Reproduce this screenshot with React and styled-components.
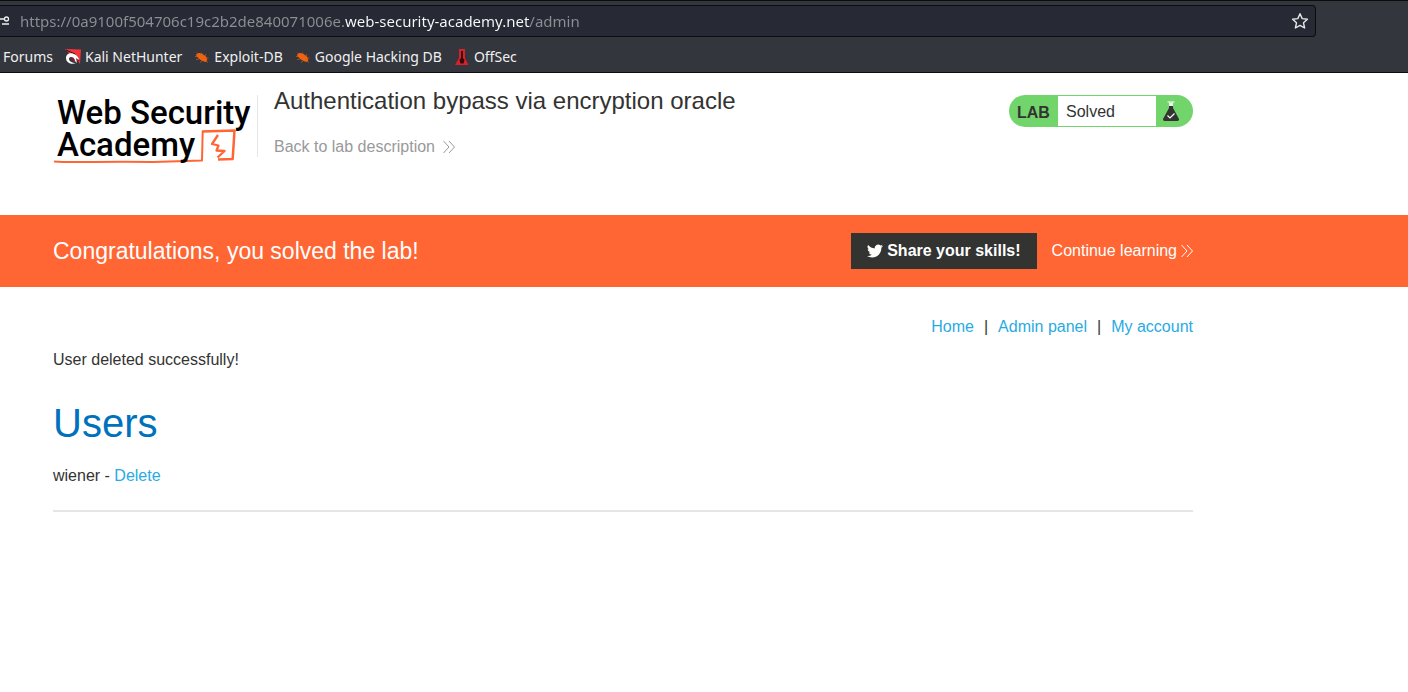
import React from "react";
import styled, { createGlobalStyle } from "styled-components";

const GlobalStyle = createGlobalStyle`
  *, *::before, *::after { box-sizing: border-box; }
  body {
    margin: 0;
    background: #fff;
    color: #333332;
    font: 16px/24px "Liberation Sans", Arial, sans-serif;
  }
  h1, h2, p { margin: 0; font-weight: 400; }
  a { text-decoration: none; }
`;

/* Browser chrome */

const Chrome = styled.div`
  padding-top: 4px;
  background: #33363d;
  border: solid #0c0c0d;
  border-width: 1px 0;
  color: #f0f0f1;
  font: 14px/20px "Noto Sans", sans-serif;
`;

const AddressBar = styled.form`
  display: flex;
  align-items: center;
  height: 32px;
  margin-right: 92px;
  padding-right: 6px;
  background: #272a34;
  border: 1px solid #0c0c0d;
  border-left: 0;
  border-radius: 0 4px 4px 0;
`;

const Permissions = styled.svg`
  flex: none;
  width: 10px;
  height: 16px;
  margin-right: 10px;
`;

/* The host is lit and the rest of the address is dimmed. */
const Address = styled.input`
  flex: 1;
  min-width: 0;
  padding: 0;
  border: 0;
  outline: 0;
  font: inherit;
  font-size: 15px;
  color: transparent;
  caret-color: #fff;
  background: linear-gradient(to right, #8e8f94 324px, #fbfbfe 324px 510px, #8e8f94 510px);
  background-clip: text;
`;

const StarButton = styled.button`
  display: flex;
  padding: 0;
  border: 0;
  background: none;
  color: #e8e8ea;
`;

const Bookmarks = styled.nav`
  display: flex;
  gap: 12px;
  height: 35px;
  padding-left: 3px;
  align-items: center;
  padding-top: 4px;
`;

const Bookmark = styled.a`
  display: flex;
  align-items: center;
  gap: 4px;
  color: inherit;
  white-space: nowrap;
`;

/* Lab page */

const Container = styled.div`
  max-width: 1193px;
  padding-left: 53px;
`;

const HeaderRow = styled(Container)`
  display: flex;
  align-items: flex-start;
  height: 142px;
  padding-top: 22px;
`;

const LogoLink = styled.a`
  width: 205px;
  height: 62px;
  margin-right: 16px;
  border-right: 1px solid #e6e6e6;
`;

const Logo = styled.svg`
  display: block;
  overflow: visible;
  font: 500 33px Roboto, sans-serif;
`;

const Titles = styled.div`
  flex: 1;
  display: flex;
  flex-direction: column;
  align-items: flex-start;
  gap: 28px;
`;

const Title = styled.h2`
  font-size: 24px;
  line-height: 12px;
`;

const ArrowLink = styled.a`
  display: flex;
  align-items: center;
  gap: ${(p) => p.$gap};
  color: ${(p) => p.$color};
`;

const Status = styled.div`
  display: flex;
  align-items: center;
  width: 184px;
  height: 32px;
  padding: 1px 0 1px 8px;
  background: #72d56c;
  border-radius: 16px;
`;

const StatusLabel = styled.strong`
  width: 41px;
  padding-top: 4px;
`;

const StatusValue = styled.p`
  width: 98px;
  padding: 4px 8px 2px;
  background: #fff;
`;

const Flask = styled.svg`
  margin-left: 7px;
`;

const Banner = styled.section`
  background: #ff6633;
  color: #fff;
`;

const BannerRow = styled(Container)`
  display: flex;
  align-items: center;
  height: 72px;
`;

const BannerText = styled.p`
  flex: 1;
  font-size: 23px;
`;

const ShareButton = styled.button`
  display: flex;
  align-items: center;
  gap: 4px;
  height: 36px;
  margin-right: 15px;
  padding: 0 16px;
  border: 0;
  background: #333332;
  color: #fff;
  font: inherit;
  font-weight: 700;
`;

const Content = styled(Container).attrs({ as: "main" })`
  display: block;
  padding-top: 28px;
`;

const TopLinks = styled.nav`
  display: flex;
  justify-content: flex-end;
  gap: 10px;
  margin-bottom: 9px;
`;

const TextLink = styled.a`
  color: #29abe2;
`;

const Heading = styled.h1`
  margin: 27px 0 17px;
  color: #0071bc;
  font-size: 40px;
  line-height: 48px;
`;

const UserRow = styled.p`
  padding-bottom: 22px;
  border-bottom: 2px solid #e6e6e6;
`;

const NetHunterIcon = () => (
  <svg width="16" height="16" viewBox="0 0 16 16" aria-hidden="true">
    <path d="M0 0 16 .500 15 15 11 9 5 5Z" fill="#f5333c" />
    <path d="M1 1 10 5 14 12" fill="none" stroke="#30141a" />
    <path d="M1 9C1 5 5 3 9 5c3 1 5 4 5 6l-3-2 1 5-4-4C7 7 4 8 4 10c0 2 3 4 7 4-4 2-10 0-10-5Z" fill="#fff" />
    <path d="M5 10c3-2 4 0 4 3" fill="none" stroke="#7d252d" strokeWidth="2" />
  </svg>
);

const BugIcon = () => (
  <svg width="16" height="16" viewBox="0 0 16 16" aria-hidden="true">
    <path d="M2 6C3 3 7 3.500 10 6c3 1.500 4 5 2.500 7C9 13 4 10 2 6Z" fill="#ef6212" />
    <path d="M4 5 2.500 3.500M8 5 7.500 3.500M11 7l1-2M3 7.500H1M5 10l-3 .5M8 12l-2 1.500M12 9l2.500 0M12 12l2 1.500" stroke="#a6501f" fill="none" />
  </svg>
);

const OffSecIcon = () => (
  <svg width="16" height="16" viewBox="0 0 16 16" aria-hidden="true">
    <path d="M5 0H11V9L14.500 16H1L5 9Z" fill="#d9202a" />
    <path d="M7 2h2v7l1.500 2-1 3.500h-3l-1-3.500L7 9Z" fill="#35060b" />
  </svg>
);

const BOOKMARKS = [
  { name: "Forums" },
  { name: "Kali NetHunter", Icon: NetHunterIcon },
  { name: "Exploit-DB", Icon: BugIcon },
  { name: "Google Hacking DB", Icon: BugIcon },
  { name: "OffSec", Icon: OffSecIcon },
];

const Chevrons = () => (
  <svg width="12" height="14" viewBox="0 0 12 14" fill="none" stroke="currentColor" aria-hidden="true">
    <path d="M.500 1 6 7 .500 13M6 1 11.500 7 6 13" />
  </svg>
);

const Twitter = () => (
  <svg width="16" height="16" viewBox="0 0 24 24" fill="currentColor" aria-hidden="true">
    <path d="M23.950 4.570a10 10 0 0 1-2.820.770 4.960 4.960 0 0 0 2.160-2.720c-.950.550-2 .960-3.130 1.180a4.920 4.920 0 0 0-8.380 4.480C7.690 8.100 4.070 6.130 1.640 3.160a4.920 4.920 0 0 0 1.520 6.570 4.900 4.900 0 0 1-2.230-.620v.060a4.920 4.920 0 0 0 3.950 4.830 5 5 0 0 1-2.210.080 4.940 4.940 0 0 0 4.600 3.420A9.870 9.870 0 0 1 0 19.540a14 14 0 0 0 7.550 2.210c9.050 0 14-7.500 14-13.980 0-.210 0-.420-.020-.630a9.940 9.940 0 0 0 2.420-2.570Z" />
  </svg>
);

export default function App() {
  return (
    <>
      <GlobalStyle />
      <Chrome>
        <AddressBar onSubmit={(e) => e.preventDefault()}>
          <Permissions viewBox="0 0 10 16" fill="none" stroke="#f0f0f1" aria-hidden="true">
            <path d="M0 6H4M2 11H9" strokeWidth="1.500" />
            <circle cx="6.500" cy="6" r="2" strokeWidth="1.300" />
          </Permissions>
          <Address
            aria-label="Address"
            spellCheck={false}
            defaultValue="https://0a9100f504706c19c2b2de840071006e.web-security-academy.net/admin"
          />
          <StarButton type="button" aria-label="Bookmark this page">
            <svg width="18" height="18" viewBox="0 0 18 18" fill="none" stroke="currentColor" strokeWidth="1.400" strokeLinejoin="round" aria-hidden="true">
              <path d="m9 1.700 2.200 4.900 5.200.600-3.900 3.600 1.100 5.200L9 13.400 4.400 16l1.100-5.200L1.600 7.200l5.200-.600Z" />
            </svg>
          </StarButton>
        </AddressBar>
        <Bookmarks aria-label="Bookmarks">
          {BOOKMARKS.map(({ name, Icon }) => (
            <Bookmark key={name} href="#">
              {Icon && <Icon />}
              {name}
            </Bookmark>
          ))}
        </Bookmarks>
      </Chrome>

      <header>
        <HeaderRow>
          <LogoLink href="#">
            <Logo width="204" height="72" viewBox="0 0 204 72">
              <g fill="none" stroke="#ff6633" strokeLinejoin="round">
                <path d="M1 66.500C20 68 50 66 100 67L149 65.500 149.700 36" strokeWidth="2" />
                <path d="M149 36.500 181.500 35.500 179.700 64 165 64.500" strokeWidth="2.500" />
                <path d="M165 40 159 49 165.500 50.500 163.500 55.500 171.500 56 164.500 62.500" strokeWidth="2.300" />
              </g>
              <text>
                <tspan x="4" y="29">Web Security</tspan>
                <tspan x="4" y="61">Academy</tspan>
              </text>
            </Logo>
          </LogoLink>
          <Titles>
            <Title>Authentication bypass via encryption oracle</Title>
            <ArrowLink href="#" $gap="8px" $color="#999">
              Back to lab description
              <Chevrons />
            </ArrowLink>
          </Titles>
          <Status>
            <StatusLabel>LAB</StatusLabel>
            <StatusValue>Solved</StatusValue>
            <Flask width="16" height="20" viewBox="0 0 16 20" aria-hidden="true">
              <path d="M4.500 1h7" stroke="#fff" strokeWidth="1" />
              <path d="M6 1.500h4v4H6z" fill="#e9f7e8" />
              <path d="M6 5h4v2l6 11c0 1-.500 2-1.500 2h-13C.500 20 0 19 0 18L6 7Z" fill="#333332" />
              <path d="m4.500 14.500 2.500 2.500 4.500-4.500" fill="none" stroke="#fff" strokeWidth="1.200" />
            </Flask>
          </Status>
        </HeaderRow>
      </header>

      <Banner>
        <BannerRow>
          <BannerText>Congratulations, you solved the lab!</BannerText>
          <ShareButton type="button">
            <Twitter />
            Share your skills!
          </ShareButton>
          <ArrowLink href="#" $gap="4px" $color="#fff">
            Continue learning
            <Chevrons />
          </ArrowLink>
        </BannerRow>
      </Banner>

      <Content>
        <TopLinks>
          <TextLink href="#">Home</TextLink>
          <span>|</span>
          <TextLink href="#">Admin panel</TextLink>
          <span>|</span>
          <TextLink href="#">My account</TextLink>
        </TopLinks>
        <p>User deleted successfully!</p>
        <Heading>Users</Heading>
        <UserRow>
          wiener - <TextLink href="#">Delete</TextLink>
        </UserRow>
      </Content>
    </>
  );
}
